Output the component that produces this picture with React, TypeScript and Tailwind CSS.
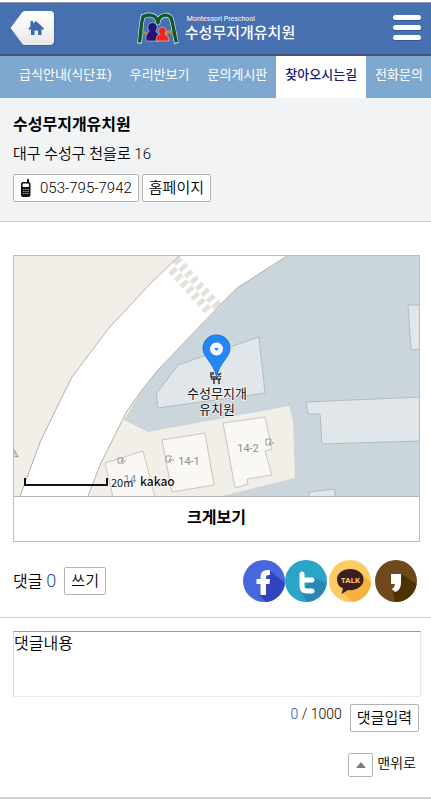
import React, { useState } from 'react';

interface NavItem {
  label: string;
  active?: boolean;
}

const NAV_ITEMS: NavItem[] = [
  { label: '급식안내(식단표)' },
  { label: '우리반보기' },
  { label: '문의게시판' },
  { label: '찾아오시는길', active: true },
  { label: '전화문의' },
];

const MAX_LENGTH = 1000;

const buttonClass =
  'flex h-7 items-center rounded-[2px] border border-[#b4b4b4] bg-white text-[15px] leading-5 text-black';

function HomeIcon() {
  return (
    <svg width="46" height="36" viewBox="0 0 46 36" aria-hidden="true">
      <defs>
        <linearGradient id="home-bg" x1="0" y1="0" x2="0" y2="1">
          <stop offset="0" stopColor="#ffffff" />
          <stop offset="1" stopColor="#e9e9e9" />
        </linearGradient>
      </defs>
      <path
        d="M1 18 12.500 2.500Q13.500 1 15.500 1H41Q45 1 45 5V31Q45 35 41 35H15.500Q13.500 35 12.500 33.500Z"
        fill="#33568c"
        opacity=".5"
      />
      <path
        d="M.5 17 12 1.500Q13 0 15 0H40Q44 0 44 4V30Q44 34 40 34H15Q13 34 12 32.500Z"
        fill="url(#home-bg)"
      />
      <path
        d="M20.500 10H23V12.500L26 10 34 17.500 33 19 31.500 18V24H28V19.500H24.500V24H21V18L19.500 19 18.500 17.500 20.500 15.500Z"
        fill="#3a69ad"
      />
    </svg>
  );
}

function LogoMark() {
  return (
    <svg width="44" height="34" viewBox="0 0 44 34" aria-hidden="true">
      <g fill="none" strokeLinecap="butt" strokeLinejoin="round">
        <path
          d="M3.500 31.500C5 20 5 10 7.500 2.500M6.500 5C12 1.500 21 2 22 11C23 2 32 1.500 35 6C37.500 12 38 22 40.500 31.500"
          stroke="#e6eef2"
          strokeWidth="4.600"
        />
        <path d="M6 21C10 19 12 23 13 29M38 24C34 17 30 19 29 26" stroke="#b18b4c" strokeWidth="3" />
        <path
          d="M3.500 30.500C5 20 5 10 7.500 3M6.500 5C12 1.500 21 2 22 11C23 2 32 1.500 35 6C37.500 12 38 22 40.500 30.500"
          stroke="#0c5a2c"
          strokeWidth="3.400"
        />
      </g>
      <path
        d="M16.500 10.500A4.800 4.800 0 0 0 13 18.500Q13.500 20 11.500 21Q9.500 23 10 29H23V25Q23 21.500 20.500 20.500Q19.500 19.500 20 18.500A4.800 4.800 0 0 0 16.500 10.500Z"
        fill="#241471"
        stroke="#e6eef2"
        strokeWidth=".5"
      />
      <path
        d="M26.300 15A3.800 3.800 0 0 0 23.500 21.500Q23.500 23 21.500 23.500Q20 25 20 29H33Q33 24.500 30.500 23.500Q29 22.500 29 21.500A3.800 3.800 0 0 0 26.300 15Z"
        fill="#ed2324"
        stroke="#e6eef2"
        strokeWidth=".5"
      />
    </svg>
  );
}

function Header() {
  return (
    <header className="mt-0.5 grid h-[54px] grid-cols-[1fr_auto_1fr] items-center border-t border-b-2 border-t-[#8a97ac] border-b-[#44566f] bg-[#4770b1] px-2.5">
      <a href="#home" aria-label="홈">
        <HomeIcon />
      </a>
      <a href="#home" className="flex items-center gap-[5px] text-white">
        <LogoMark />
        <span className="flex flex-col">
          <span className="pl-0.5 text-[7px] leading-2">Montessori Preschool</span>
          <span className="text-[15px] leading-5 font-medium">수성무지개유치원</span>
        </span>
      </a>
      <button type="button" aria-label="메뉴" className="flex w-7 flex-col gap-[5px] justify-self-end pb-0.5">
        <span className="h-[5px] rounded-full bg-white shadow-[0_1px_0_#36588f]" />
        <span className="h-[5px] rounded-full bg-white shadow-[0_1px_0_#36588f]" />
        <span className="h-[5px] rounded-full bg-white shadow-[0_1px_0_#36588f]" />
      </button>
    </header>
  );
}

function NavBar() {
  return (
    <nav className="flex h-[42px] overflow-hidden bg-[#7fa8d0] pl-2.5 whitespace-nowrap">
      {NAV_ITEMS.map((item) => (
        <a
          key={item.label}
          href="#menu"
          className={
            item.active
              ? 'flex shrink-0 items-center bg-white px-[9px] pb-1 text-[13px] font-medium text-[#17206f]'
              : 'flex shrink-0 items-center px-[9px] pb-1 text-[13px] text-white'
          }
        >
          {item.label}
        </a>
      ))}
    </nav>
  );
}

function PhoneIcon() {
  return (
    <svg width="12" height="20" viewBox="0 0 12 20" aria-hidden="true">
      <path d="M7 4V1.500Q8 0 9 1.500V4Q10.500 4.500 10.500 6V17Q10.500 19 8.500 19H3Q1 19 1 17V6Q1 4 3 4Z" fill="#111111" />
      <rect x="2.500" y="5.500" width="6.500" height="3.500" rx="1" fill="#ffffff" />
      <path d="M3 11.500H9M3 13.500H9M3 15.500H9" stroke="#999999" strokeDasharray="1.500 .7" />
    </svg>
  );
}

function InfoSection() {
  return (
    <section className="border-b border-[#d2d2d4] bg-[#f2f3f5] pt-4 pr-[11px] pb-[19px] pl-[13px]">
      <h1 className="text-[16px] leading-[22px] font-bold text-black">수성무지개유치원</h1>
      <p className="mt-1.5 text-[15px] leading-6 font-[350] text-black">대구 수성구 천을로 16</p>
      <div className="mt-2 flex gap-[3px]">
        <a href="tel:053-795-7942" className={`${buttonClass} gap-2 px-1.5 font-[350]`}>
          <PhoneIcon />
          053-795-7942
        </a>
        <a href="#homepage" className={`${buttonClass} px-1.5 font-[350]`}>
          홈페이지
        </a>
      </div>
    </section>
  );
}

function Crosswalk() {
  const blocks: Array<[number, number]> = [];
  for (let i = 0; i < 8; i++) blocks.push([163.7 + i * 5.5, 5.3 + i * 6.2]);
  for (let i = 0; i < 7; i++) blocks.push([159.3 + i * 5.5, 15.3 + i * 6.2]);

  return (
    <g fill="#e4e0dc">
      {blocks.map(([x, y]) => (
        <rect key={`${x}-${y}`} x="-2.300" y="-4.500" width="4.600" height="9" transform={`translate(${x} ${y}) rotate(48)`} />
      ))}
    </g>
  );
}

function MapView() {
  return (
    <svg
      className="block h-60 w-full"
      viewBox="0 0 405 240"
      preserveAspectRatio="xMidYMid slice"
      role="img"
      aria-label="수성무지개유치원 지도"
    >
      <rect width="405" height="240" fill="#f2efe8" />
      {/* School grounds */}
      <path d="M273 0 223 32 143 115 128 134 110 164 134 176 275 150 279 164 281 222 208 240H405V0Z" fill="#cbd5dc" />
      {/* Road */}
      <path d="M165 0 136 28 94 73 58 121 49 139 27 184 6 240H74L86 209 113 155 128 134 143 115 223 32 273 0Z" fill="#ffffff" />
      <Crosswalk />
      <path
        d="M165 0 136 28 94 73 58 121 49 139 27 184 6 240M74 240 86 209 113 155 128 134 143 115 206 49 223 32 273 0"
        fill="none"
        stroke="#b2b1ad"
      />
      <path
        d="M164 109 142 138 144 152 251 137 245 81ZM292 146 406 141V185L308 188 306 158H294ZM406 49H394L397 94 406 93ZM295 241V236L321 233V241Z"
        fill="#e0e6ea"
        stroke="#b1bbc2"
      />
      <path
        d="M209 167 251 161 258 193 251 195 258 219 233 223 234 228 221 232ZM148 184 191 177 200 229 158 236ZM99 241 91 207 129 195 141 241Z"
        fill="#f9f8f5"
        stroke="#c8c5bd"
      />
      {/* Entrances */}
      <g fill="none" stroke="#9a9a9a">
        <path d="M109 202H104V207H110M109 202V204M112 205H107M109 203 107 205 109 207" />
        <path d="M157 200H152V206H157M157 200V202M160 204H155M157 202 155 204 157 206" />
        <path d="M257 183H252V189H257M257 183V185M260 187H255M257 185 255 187 257 189" />
        <path d="M0 193 4 201 0 200M0 196 2 199" />
      </g>
      <g fill="#8c8f94" fontSize="11" textAnchor="middle">
        <text x="116" y="227">14</text>
        <text x="175" y="209">14-1</text>
        <text x="234" y="196">14-2</text>
      </g>
      {/* Scale bar */}
      <path d="M11 222V229H93V222" fill="none" stroke="#111111" strokeWidth="2" />
      <g
        className="font-['Noto_Sans_CJK_KR',sans-serif]"
        fill="#111111"
        stroke="#ffffff"
        strokeOpacity=".6"
        strokeWidth="2"
        paintOrder="stroke"
      >
        <text x="97" y="231" fontSize="11">20m</text>
        <text x="126" y="230" fontSize="12" fontWeight="500">kakao</text>
      </g>
      {/* Place marker */}
      <path d="M197 116V121H202M199 116V119M197 123H207M200 123V128M205 123V128M203 117 207 121M207 117 202 122" fill="none" stroke="#333333" strokeWidth="1.500" />
      <path
        d="M202.500 79C194.500 79 189 85 189 92.500C189 101 199 106 202.500 120C206 106 216 101 216 92.500C216 85 210.500 79 202.500 79Z"
        fill="#2388f5"
        stroke="#1671d8"
      />
      <circle cx="202.500" cy="93" r="6.500" fill="#ffffff" />
      <path d="M200 92H205L202.500 95Z" fill="#2388f5" />
      <g fill="#111111" stroke="#ffffff" strokeOpacity=".6" strokeWidth="2" paintOrder="stroke" fontSize="13" textAnchor="middle">
        <text x="203" y="142">수성무지개</text>
        <text x="203" y="158">유치원</text>
      </g>
    </svg>
  );
}

function ShareLinks() {
  return (
    <div className="flex pr-[3px]">
      <a href="#facebook" aria-label="페이스북">
        <svg width="42" height="42" viewBox="0 0 42 42">
          <circle cx="21" cy="21" r="21" fill="#4668dc" />
          <path d="M27 11 42 23A21 21 0 0 1 23 42L16 35Z" fill="#3243bd" />
          <path
            d="M17.500 35V24H13.500V19H17.500V17Q17.500 10 24.500 10H27V15H25Q23 15 23 17V19H27L26.500 24H23V35Z"
            fill="#ffffff"
          />
        </svg>
      </a>
      <a href="#twitter" aria-label="트위터">
        <svg width="42" height="42" viewBox="0 0 42 42">
          <circle cx="21" cy="21" r="21" fill="#29a5c8" />
          <path d="M29 18 41.500 23A21 21 0 0 1 22 42L16 31Z" fill="#2a86b3" />
          <path d="M17 14V26Q17 31 22 31H27M17 20H27" fill="none" stroke="#ffffff" strokeWidth="5" strokeLinecap="round" />
        </svg>
      </a>
      <a href="#kakaotalk" aria-label="카카오톡" className="ml-0.5">
        <svg width="42" height="42" viewBox="0 0 42 42">
          <circle cx="21" cy="21" r="21" fill="#fdcb61" />
          <path d="M33 14 42 23A21 21 0 0 1 23 42L14 33Z" fill="#f6b23f" />
          <path
            d="M21 9C13.500 9 8 13.500 8 19.500C8 24 10.500 27 14 28.500L12.500 34 19 30C28 31 34.500 26 34.500 19.500C34.500 13.500 29 9 21 9Z"
            fill="#391f22"
          />
          <text x="21.500" y="23" fontSize="8" fontWeight="700" fill="#fdcb61" textAnchor="middle">TALK</text>
        </svg>
      </a>
      <a href="#kakaostory" aria-label="카카오스토리" className="ml-1">
        <svg width="42" height="42" viewBox="0 0 42 42">
          <circle cx="21" cy="21" r="21" fill="#6f481b" />
          <path d="M27 14 41.500 24A21 21 0 0 1 20 42L18 31Z" fill="#4d3303" />
          <path d="M16 14H26V23Q26 30 20 32L17 29Q20 27 20 24H16Z" fill="#ffffff" />
        </svg>
      </a>
    </div>
  );
}

export default function App() {
  const [comment, setComment] = useState('댓글내용');
  const [count, setCount] = useState(0);

  const handleChange = (e: React.ChangeEvent<HTMLTextAreaElement>) => {
    setComment(e.target.value);
    setCount(e.target.value.length);
  };

  return (
    <div className="bg-white font-['Roboto','Noto_Sans_CJK_KR',sans-serif] text-black">
      <Header />
      <NavBar />

      <main>
        <InfoSection />

        {/* Map */}
        <section className="pt-[33px] pr-[11px] pl-[13px]">
          <div className="border border-[#bdbdbd]">
            <MapView />
            <a
              href="#map"
              className="flex h-[45px] items-center justify-center border-t border-[#b4b4b4] pb-0.5 text-[16px] font-bold"
            >
              크게보기
            </a>
          </div>
        </section>

        {/* Comment count and share */}
        <section className="flex items-center justify-between border-b border-[#d2d2d4] pt-[18px] pr-[11px] pb-[15px] pl-[13px]">
          <div className="flex items-center font-[350]">
            <h2 className="text-[16px] leading-5">
              댓글 <span className="text-[18px] text-[#1f4fa5]">0</span>
            </h2>
            <button type="button" className={`${buttonClass} ml-2 px-1.5`}>
              쓰기
            </button>
          </div>
          <ShareLinks />
        </section>

        {/* Comment form */}
        <form className="pt-[13px] pr-2.5 pl-[13px]" onSubmit={(e) => e.preventDefault()}>
          <textarea
            aria-label="댓글내용"
            value={comment}
            maxLength={MAX_LENGTH}
            onChange={handleChange}
            className="block h-[66px] w-full resize-none border border-t-[#9a9ea3] border-r-[#e3e6ea] border-b-[#e8ecf0] border-l-[#d5dbe0] text-[16px] leading-6 font-[350] outline-none"
          />
          <div className="mt-[7px] flex items-start justify-end gap-2 pr-0.5">
            <span className="text-[14px] leading-5 font-[350]">
              <span className="text-[#1f4fa5]">{count}</span> / {MAX_LENGTH}
            </span>
            <button type="submit" className={`${buttonClass} px-1.5 font-[350]`}>
              댓글입력
            </button>
          </div>
        </form>

        <div className="mt-[21px] flex justify-end border-b-2 border-[#d2d2d4] pr-[15px] pb-5">
          <a href="#top" className="flex items-start gap-1 text-[14px] leading-5 font-[350]">
            <span className="flex h-6 w-[25px] items-center justify-center rounded-[2px] border border-[#b4b4b4]">
              <svg width="10" height="6" viewBox="0 0 10 6" aria-hidden="true">
                <path d="M0 6 5 0 10 6Z" fill="#7b7b7b" />
              </svg>
            </span>
            맨위로
          </a>
        </div>
      </main>
    </div>
  );
}
